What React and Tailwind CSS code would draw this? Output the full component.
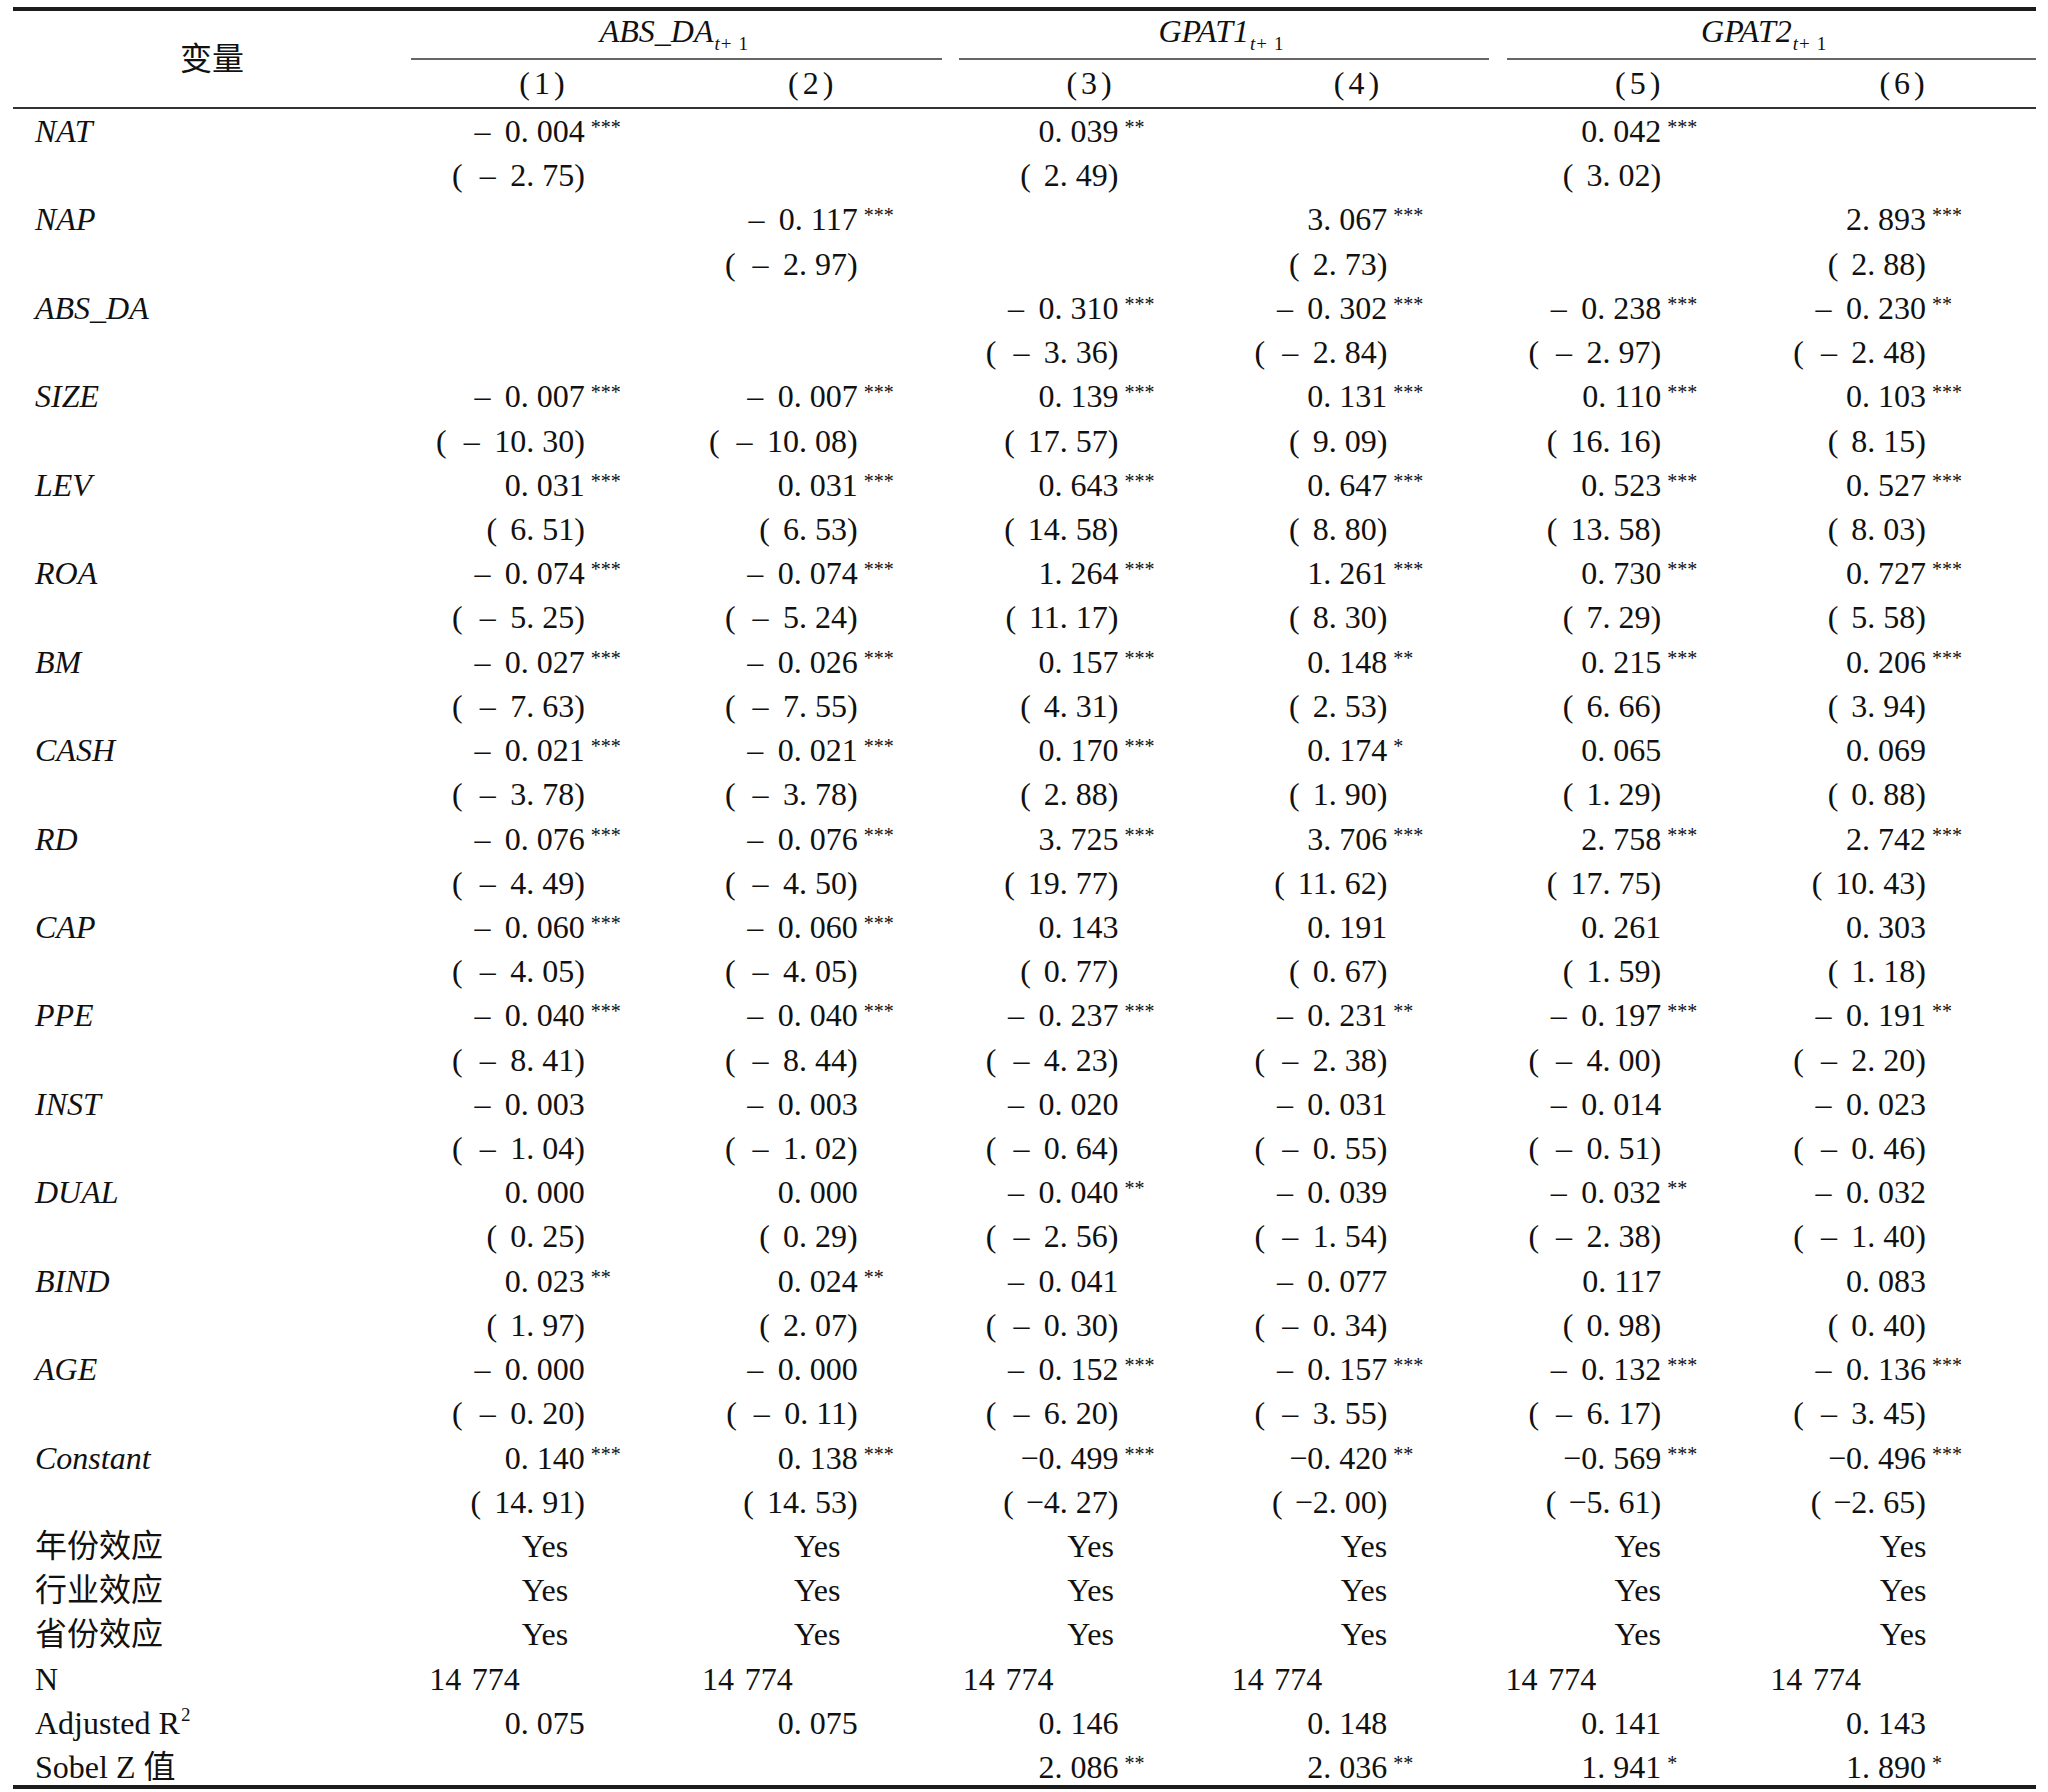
import React from 'react';

const serif = { fontFamily: '"Liberation Serif", "Noto Sans CJK SC", serif' };

// right padding that puts the number's last digit where the reference has it
const padR = ['pr-[97px]', 'pr-[95px]', 'pr-[105px]', 'pr-[107px]', 'pr-[104px]', 'pr-[110px]'];
const padN = ['pr-[162px]', 'pr-[160px]', 'pr-[170px]', 'pr-[172px]', 'pr-[169px]', 'pr-[175px]'];
const padHead = ['pr-[9px]', 'pr-[13px]', 'pl-[2px]', 'pr-[5px]', 'pl-[16px]', 'pl-[3px]'];
const padYes = ['pr-[3px]', '', 'pl-[5px]', 'pl-[10px]', 'pl-[16px]', 'pl-[5px]'];

const rows = [
  ['NAT', [['-0.004', '***', '-2.75'], null, ['0.039', '**', '2.49'], null, ['0.042', '***', '3.02'], null]],
  ['NAP', [null, ['-0.117', '***', '-2.97'], null, ['3.067', '***', '2.73'], null, ['2.893', '***', '2.88']]],
  ['ABS_DA', [null, null, ['-0.310', '***', '-3.36'], ['-0.302', '***', '-2.84'], ['-0.238', '***', '-2.97'], ['-0.230', '**', '-2.48']]],
  ['SIZE', [['-0.007', '***', '-10.30'], ['-0.007', '***', '-10.08'], ['0.139', '***', '17.57'], ['0.131', '***', '9.09'], ['0.110', '***', '16.16'], ['0.103', '***', '8.15']]],
  ['LEV', [['0.031', '***', '6.51'], ['0.031', '***', '6.53'], ['0.643', '***', '14.58'], ['0.647', '***', '8.80'], ['0.523', '***', '13.58'], ['0.527', '***', '8.03']]],
  ['ROA', [['-0.074', '***', '-5.25'], ['-0.074', '***', '-5.24'], ['1.264', '***', '11.17'], ['1.261', '***', '8.30'], ['0.730', '***', '7.29'], ['0.727', '***', '5.58']]],
  ['BM', [['-0.027', '***', '-7.63'], ['-0.026', '***', '-7.55'], ['0.157', '***', '4.31'], ['0.148', '**', '2.53'], ['0.215', '***', '6.66'], ['0.206', '***', '3.94']]],
  ['CASH', [['-0.021', '***', '-3.78'], ['-0.021', '***', '-3.78'], ['0.170', '***', '2.88'], ['0.174', '*', '1.90'], ['0.065', '', '1.29'], ['0.069', '', '0.88']]],
  ['RD', [['-0.076', '***', '-4.49'], ['-0.076', '***', '-4.50'], ['3.725', '***', '19.77'], ['3.706', '***', '11.62'], ['2.758', '***', '17.75'], ['2.742', '***', '10.43']]],
  ['CAP', [['-0.060', '***', '-4.05'], ['-0.060', '***', '-4.05'], ['0.143', '', '0.77'], ['0.191', '', '0.67'], ['0.261', '', '1.59'], ['0.303', '', '1.18']]],
  ['PPE', [['-0.040', '***', '-8.41'], ['-0.040', '***', '-8.44'], ['-0.237', '***', '-4.23'], ['-0.231', '**', '-2.38'], ['-0.197', '***', '-4.00'], ['-0.191', '**', '-2.20']]],
  ['INST', [['-0.003', '', '-1.04'], ['-0.003', '', '-1.02'], ['-0.020', '', '-0.64'], ['-0.031', '', '-0.55'], ['-0.014', '', '-0.51'], ['-0.023', '', '-0.46']]],
  ['DUAL', [['0.000', '', '0.25'], ['0.000', '', '0.29'], ['-0.040', '**', '-2.56'], ['-0.039', '', '-1.54'], ['-0.032', '**', '-2.38'], ['-0.032', '', '-1.40']]],
  ['BIND', [['0.023', '**', '1.97'], ['0.024', '**', '2.07'], ['-0.041', '', '-0.30'], ['-0.077', '', '-0.34'], ['0.117', '', '0.98'], ['0.083', '', '0.40']]],
  ['AGE', [['-0.000', '', '-0.20'], ['-0.000', '', '-0.11'], ['-0.152', '***', '-6.20'], ['-0.157', '***', '-3.55'], ['-0.132', '***', '-6.17'], ['-0.136', '***', '-3.45']]],
  ['Constant', [['0.140', '***', '14.91'], ['0.138', '***', '14.53'], ['-0.499', '***', '-4.27'], ['-0.420', '**', '-2.00'], ['-0.569', '***', '-5.61'], ['-0.496', '***', '-2.65']]],
];

function fmt(v, tight) {
  const neg = v.startsWith('-');
  const [i, d] = (neg ? v.slice(1) : v).split('.');
  const body = `${i}. ${d}`;
  if (!neg) return body;
  return tight ? `\u2212${body}` : `\u2013 \u2009${body}`;
}

function Num({ text, stars }) {
  return (
    <span className="relative">
      {text}
      {stars && (
        <span className="absolute left-full top-[4px] ml-[6px] text-[20px] leading-none">{stars}</span>
      )}
    </span>
  );
}

function TStat({ v, tight }) {
  const gap = tight ? 'ml-[12px]' : v.startsWith('-') ? 'ml-[17px]' : 'ml-[13px]';
  return (
    <>
      (<span className={gap}>{fmt(v, tight)}</span>)
    </>
  );
}

function Line({ label, italic, className = 'h-[44.22px]', children }) {
  return (
    <div className={`grid grid-cols-[398px_repeat(6,minmax(0,1fr))] leading-[44.22px] ${className}`}>
      <div className={`pl-[22px] whitespace-nowrap ${italic ? 'italic' : ''}`}>{label}</div>
      {children}
    </div>
  );
}

function Yes() {
  return (
    <>
      {padYes.map((p, i) => (
        <div key={i} className={`text-center ${p}`}>Yes</div>
      ))}
    </>
  );
}

function Sub() {
  return (
    <span className="relative top-[8px] ml-[1px] text-[19px]">
      t<span className="not-italic ml-[1px]">+</span>
      <span className="not-italic ml-[7px]">1</span>
    </span>
  );
}

export default function App() {
  const last = rows.length - 1;
  return (
    <div className="bg-white min-h-[1792px] pt-[7px] pl-[13px] text-[32px] text-[#111]" style={serif}>
      <div className="w-[2023px] border-t-[4px] border-b-[4px] border-[#1c1c1c]">
        {/* header */}
        <div className="grid grid-cols-[398px_repeat(6,minmax(0,1fr))] border-b-2 border-[#333]">
          <div className="row-span-2 flex items-center justify-center">变量</div>
          <div className="col-span-2 mr-[11px] h-[49px] border-b-2 border-[#666] pr-[5px] text-center italic leading-[41px]">
            ABS_DA<Sub />
          </div>
          <div className="col-span-2 ml-[6px] mr-[5px] h-[49px] border-b-2 border-[#666] pr-[6px] text-center italic leading-[41px]">
            GPAT1<Sub />
          </div>
          <div className="col-span-2 ml-[13px] h-[49px] border-b-2 border-[#666] pr-[16px] text-center italic leading-[41px]">
            GPAT2<Sub />
          </div>
          {padHead.map((p, n) => (
            <div key={n} className={`h-[47px] text-center leading-[47px] ${p}`}>
              (<span className="mx-[4px]">{n + 1}</span>)
            </div>
          ))}
        </div>

        {/* body */}
        {rows.map(([name, cells], r) => (
          <React.Fragment key={name}>
            <Line label={name} italic>
              {cells.map((c, i) => (
                <div key={i} className={`text-right whitespace-nowrap ${padR[i]}`}>
                  {c && <Num text={fmt(c[0], r === last && i > 1)} stars={c[1]} />}
                </div>
              ))}
            </Line>
            <Line label="">
              {cells.map((c, i) => (
                <div key={i} className={`text-right whitespace-nowrap ${padR[i]}`}>
                  {c && <TStat v={c[2]} tight={r === last && i > 1} />}
                </div>
              ))}
            </Line>
          </React.Fragment>
        ))}

        <Line label="年份效应"><Yes /></Line>
        <Line label="行业效应"><Yes /></Line>
        <Line label="省份效应"><Yes /></Line>
        <Line label="N">
          {padN.map((p, i) => (
            <div key={i} className={`text-right whitespace-nowrap ${p}`}>14 {'\u200A'}774</div>
          ))}
        </Line>
        <Line label={<>Adjusted R<sup className="relative top-[-13px] ml-[1px] text-[19px]">2</sup></>}>
          {['0.075', '0.075', '0.146', '0.148', '0.141', '0.143'].map((v, i) => (
            <div key={i} className={`text-right whitespace-nowrap ${padR[i]}`}>{fmt(v)}</div>
          ))}
        </Line>
        <Line label="Sobel Z 值" className="h-[40px]">
          {[null, null, ['2.086', '**'], ['2.036', '**'], ['1.941', '*'], ['1.890', '*']].map((v, i) => (
            <div key={i} className={`text-right whitespace-nowrap ${padR[i]}`}>
              {v && <Num text={fmt(v[0])} stars={v[1]} />}
            </div>
          ))}
        </Line>
      </div>
    </div>
  );
}
